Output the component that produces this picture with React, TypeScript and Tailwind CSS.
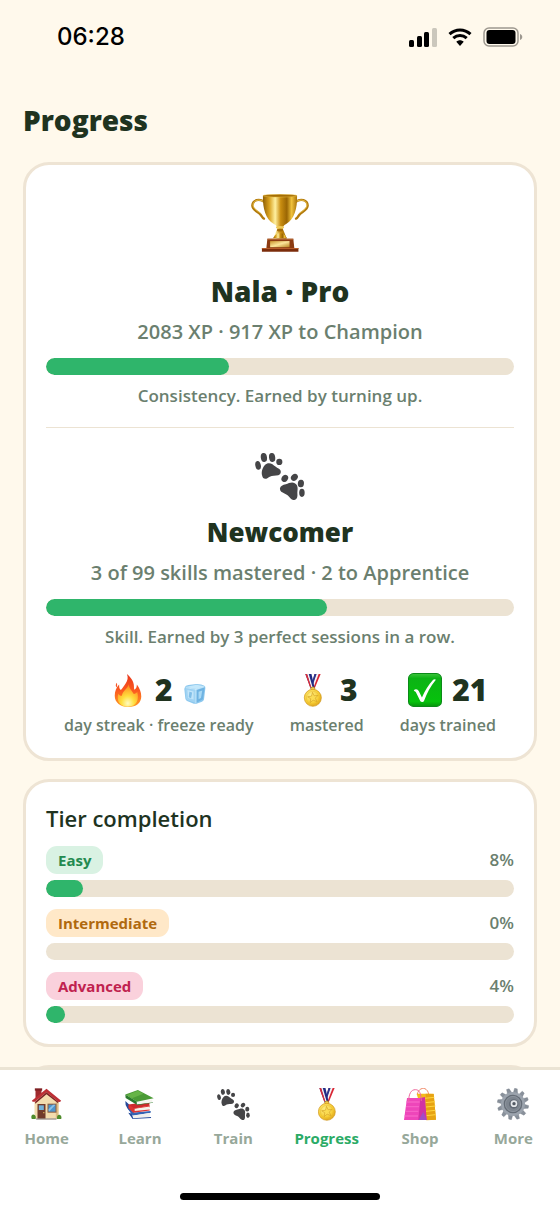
import React from 'react';

interface IconProps {
  className?: string;
}

interface RankProps {
  icon: React.ReactNode;
  title: string;
  titleSize: string;
  detail: string;
  percent: number;
  note: string;
}

interface StatProps {
  icon: React.ReactNode;
  value: number;
  label: string;
  extra?: React.ReactNode;
}

function TrophyIcon({ className }: IconProps) {
  return (
    <svg viewBox="0 0 170 170" className={className} aria-hidden="true">
      <defs>
        <linearGradient id="trophyCup" x1="0" x2="1">
          <stop offset="0" stopColor="#8f5f05" />
          <stop offset="0.18" stopColor="#d79f1c" />
          <stop offset="0.36" stopColor="#fff0a0" />
          <stop offset="0.52" stopColor="#c98d10" />
          <stop offset="0.7" stopColor="#9a6604" />
          <stop offset="0.84" stopColor="#f0c23c" />
          <stop offset="1" stopColor="#a87208" />
        </linearGradient>
        <linearGradient id="trophyPlate" x1="0" x2="1" y2="1">
          <stop offset="0" stopColor="#c9952c" />
          <stop offset="0.5" stopColor="#fbe59a" />
          <stop offset="1" stopColor="#b98420" />
        </linearGradient>
      </defs>
      <g fill="none" strokeLinecap="round">
        <path d="M39 23C24 12 5 18 4 33c-1 13 14 18 22 25 5 5 6 12 12 14" stroke="#b27a0c" strokeWidth="7" />
        <path d="M131 23c15-11 34-5 35 10 1 13-14 18-22 25-5 5-6 12-12 14" stroke="#b27a0c" strokeWidth="7" />
        <path d="M37 22C23 13 7 19 6 32c0 11 14 17 21 24" stroke="#f2cb55" strokeWidth="2.5" />
        <path d="M133 22c14-9 30-3 31 10 0 11-14 17-21 24" stroke="#f2cb55" strokeWidth="2.5" />
      </g>
      <path d="M35 5h100c1 38-8 68-31 82-9 5-13 10-10 17l11 27H65l11-27c3-7-1-12-10-17C43 73 34 43 35 5Z" fill="url(#trophyCup)" />
      <ellipse cx="85" cy="5" rx="50" ry="4" fill="#a46d05" stroke="#e8bd43" strokeWidth="1.5" />
      <ellipse cx="85" cy="98" rx="12" ry="4" fill="#f0ca57" />
      <ellipse cx="85" cy="106" rx="9" ry="4" fill="#a36b07" />
      <path d="M65 129c7-12 12-14 20-14s13 2 20 14Z" fill="url(#trophyCup)" />
      <path d="M48 131h76l3 28H45Z" fill="#8c3b12" />
      <path d="M48 131h76v3H48Z" fill="#b96a35" />
      <path d="M32 158h107v11H32Z" fill="#7b2c0b" />
      <path d="M32 158h107v3H32Z" fill="#b65c2a" />
      <path d="M56 138h57v18H56Z" fill="url(#trophyPlate)" />
    </svg>
  );
}

function PawsIcon({ className }: IconProps) {
  return (
    <svg viewBox="0 0 146 137" className={className} fill="#454547" aria-hidden="true">
      <ellipse cx="9" cy="36" rx="8" ry="13" transform="rotate(-12 9 36)" />
      <ellipse cx="26" cy="13" rx="9" ry="13" transform="rotate(-8 26 13)" />
      <ellipse cx="50" cy="13" rx="9" ry="13" transform="rotate(-8 50 13)" />
      <ellipse cx="71" cy="26" rx="9" ry="9" />
      <path d="M21 66c-3-8-1-21 8-31 6-7 15-7 22-2 6 5 11 9 19 13 8 5 7 16-2 19-8 2-18 0-25 4-6 3-8 6-13 6-5 0-8-4-9-9Z" />
      <ellipse cx="87" cy="74" rx="9" ry="11" transform="rotate(35 87 74)" />
      <ellipse cx="115" cy="71" rx="9" ry="11" transform="rotate(48 115 71)" />
      <ellipse cx="134" cy="89" rx="9" ry="11" transform="rotate(5 134 89)" />
      <ellipse cx="137" cy="116" rx="8" ry="12" />
      <path d="M73 103c1-7 8-10 17-12 9-3 18-8 26-3 9 5 9 13 8 23-1 8 1 13-1 19-3 9-14 9-19 3-5-7-10-12-18-15-8-4-14-6-13-15Z" />
    </svg>
  );
}

function FireIcon({ className }: IconProps) {
  return (
    <svg viewBox="0 0 78 97" className={className} aria-hidden="true">
      <defs>
        <linearGradient id="fireOuter" x1="0" x2="0" y1="0" y2="1">
          <stop offset="0" stopColor="#e8361c" />
          <stop offset="0.5" stopColor="#fb5a20" />
          <stop offset="1" stopColor="#ff9d22" />
        </linearGradient>
        <radialGradient id="fireInner" cx="0.5" cy="0.85" r="0.8">
          <stop offset="0" stopColor="#fffbc0" />
          <stop offset="0.4" stopColor="#ffdf3e" />
          <stop offset="1" stopColor="#ff8a1e" />
        </radialGradient>
      </defs>
      <path d="M36 0c8 7 18 17 20 31 1 7 0 12 2 15 5-2 7-8 7-15 8 10 13 23 13 35 0 19-15 31-38 31S0 84 0 64c0-13 5-25 13-33 0 7 0 13 5 16 6-5 8-11 14-19 6-9 8-17 4-28Z" fill="url(#fireOuter)" />
      <path d="M41 30c1 13 11 20 15 29 5-1 8-3 10-7 6 21 0 44-27 44C15 96 5 80 10 58c4 5 7 7 11 6 2-15 16-19 20-34Z" fill="url(#fireInner)" />
      <path d="M6 26c-4 5-4 10 0 14 1-5 2-9 0-14Z" fill="#f65a2b" />
    </svg>
  );
}

function IceIcon({ className }: IconProps) {
  return (
    <svg viewBox="0 0 63 59" className={className} aria-hidden="true">
      <path d="M2 9Q3 4 12 3L36 0q16 1 23 5 4 2 3 8l-4 33q-1 4-6 6l-16 6q-4 1-8 0L8 50q-4-2-5-7L0 15Z" fill="#8dc8ee" />
      <path d="M3 9 36 2l23 5-23 8Z" fill="#c4e8fb" />
      <path d="m3 13 30 5-1 37L9 47q-4-2-4-6Z" fill="#a0d3f3" />
      <path d="m37 18 23-8-5 35-19 10Z" fill="#6fb3e2" />
      <path d="m9 18 18 4v24l-16-5Z" fill="#c2e5fa" />
      <path d="m15 23 8 2-3 17-7-3Z" fill="#82bfe8" />
      <path d="m42 23 11-4-4 22-7 4Z" fill="#a9d9f5" />
      <path d="M34 15v41M4 11l31 5 24-8" stroke="#dff4ff" strokeWidth="2" fill="none" />
    </svg>
  );
}

function MedalIcon({ className }: IconProps) {
  return (
    <svg viewBox="0 0 53 97" className={className} aria-hidden="true">
      <defs>
        <radialGradient id="medalGold" cx="0.4" cy="0.35" r="0.7">
          <stop offset="0" stopColor="#fff08a" />
          <stop offset="0.65" stopColor="#f6cd35" />
          <stop offset="1" stopColor="#dda21a" />
        </radialGradient>
      </defs>
      <path d="M31 0h18L31 43H20Z" fill="#d92735" />
      <path d="M36 0h7L28 40h-6Z" fill="#f7f4f6" />
      <path d="M31 0h6L24 38h-5Z" fill="#29378f" />
      <path d="M4 0h18l10 43H20Z" fill="#202c85" />
      <path d="M9 0h5l11 38h-4Z" fill="#f7f4f6" />
      <path d="M4 0h5l12 38-3 2Z" fill="#df2b36" />
      <ellipse cx="26" cy="43" rx="6" ry="5" fill="#f4cf4b" stroke="#c38b18" strokeWidth="2" />
      <circle cx="26" cy="70" r="25" fill="url(#medalGold)" stroke="#cf951b" strokeWidth="2" />
      <circle cx="26" cy="70" r="19" fill="none" stroke="#e0ae28" strokeWidth="1" />
      <path d="m25 54 5 10 11-1-8 8 5 10-11-4-9 7 2-11-9-6 11-2Z" fill="#fbdc53" stroke="#c9931c" strokeWidth="1.5" strokeLinejoin="round" />
    </svg>
  );
}

function CheckIcon({ className }: IconProps) {
  return (
    <svg viewBox="0 0 100 100" className={className} aria-hidden="true">
      <defs>
        <linearGradient id="checkGreen" x1="0" x2="0" y1="0" y2="1">
          <stop offset="0" stopColor="#3cc43c" />
          <stop offset="0.15" stopColor="#0cb315" />
          <stop offset="0.85" stopColor="#06c20c" />
          <stop offset="1" stopColor="#07930d" />
        </linearGradient>
      </defs>
      <rect x="1.5" y="1.5" width="97" height="97" rx="15" fill="url(#checkGreen)" stroke="#0b8a18" strokeWidth="3" />
      <path d="M17 51c5-6 12-4 15 3l9 18c9-20 19-37 33-52 2-2 7-2 8 0C66 39 56 59 47 82c-2 4-9 4-11 0L24 58c-2-4-5-3-7-7Z" fill="#fff" />
    </svg>
  );
}

function HouseIcon({ className }: IconProps) {
  return (
    <svg viewBox="0 0 92 96" className={className} aria-hidden="true">
      <path d="M13 3h18v28H13Z" fill="#9e2b2e" />
      <path d="M11 1h22v7H11Z" fill="#7e2023" />
      <path d="M10 42 46 8l36 34v50H10Z" fill="#f3dcae" />
      <path d="M74 40h8v52h-8Z" fill="#dcbc86" />
      <path d="M46 2 90 38q-4 6-9 3L46 13 11 41q-6 2-9-3Z" fill="#bd2f35" />
      <path d="M46 13 12 41v6l34-28 35 27v-5Z" fill="#7c2024" />
      <path d="M19 48h24v45H19Z" fill="#723b2b" />
      <path d="M23 52h15v14H23Z" fill="#74b2da" />
      <circle cx="38" cy="74" r="2" fill="#f4ce5d" />
      <path d="M49 47h27v27H49Z" fill="#8a5a3d" />
      <path d="M52 50h21v21H52Z" fill="#4d94cd" />
      <path d="m52 64 14-14h7L53 71Z" fill="#8bc2e8" />
      <path d="M15 91h61v4H15Z" fill="#9b9189" />
      <path d="M1 91c-2-7 2-13 7-11 6 1 7 7 5 13H2Zm77 2c-2-8 2-14 7-13 6 2 7 8 5 13Z" fill="#4f8c2c" />
    </svg>
  );
}

function BooksIcon({ className }: IconProps) {
  return (
    <svg viewBox="0 0 88 88" className={className} aria-hidden="true">
      {/* blue */}
      <path d="M1 33q-1 14 6 22l16 21v-8l6-9Z" fill="#24499a" />
      <path d="m8 55 20 13 50-4v5l-54 9Z" fill="#3463b4" />
      <path d="m24 77 52-7-1 11-49 5Z" fill="#f0f0ee" />
      <path d="m20 71 5 15 54-4v3l-56 3L10 69Z" fill="#24499a" />
      {/* red */}
      <path d="m11 44 63-9v18l-50 14-13-12Z" fill="#ce2a2c" />
      <path d="m28 56 46-8v11l-46 7Z" fill="#f5f1e8" />
      <path d="m11 44 16 11 48-8v3l-46 7v7l46-5v3l-50 7-14-14Z" fill="#df3432" />
      {/* green */}
      <path d="m1 14 35 21v10L2 24Z" fill="#2b7a2d" />
      <path d="m36 35 47-6-1 9-46 7Z" fill="#f5f5ee" />
      <path d="M1 14 39 0l48 25-51 11Z" fill="#4b9b36" />
      <path d="m6 15 33-13 17 9-35 14Z" fill="#66b447" />
      <path d="m82 38 3-1v2l-49 7v-2Z" fill="#2b7a2d" />
    </svg>
  );
}

function BagsIcon({ className }: IconProps) {
  return (
    <svg viewBox="0 0 96 99" className={className} aria-hidden="true">
      <path d="M40 19C42 3 58-3 66 4c8 6 8 14 8 23" fill="none" stroke="#ef8a69" strokeWidth="3" />
      <path d="M38 17h51l7 78-36 1Z" fill="#f4b91d" />
      <path d="m65 17 24 1 7 77-29 2Z" fill="#e7a313" />
      <path d="m62 31 29-3m-27 16 29-3m-27 16 28-3M66 70l28-3M67 83l28-3" stroke="#ffd53f" strokeWidth="3" />
      <path d="M9 30h49l10 66H0Z" fill="#ee46ba" />
      <path d="m49 30 14-3 5 69H43Z" fill="#d132a4" />
      <path d="m44 96 14-25 10 25Z" fill="#a24cc4" />
      <path d="M8 42h39M6 56h39M4 70h39M2 84h40" stroke="#f661c6" strokeWidth="4" />
      <path d="M14 41C14 16 22 5 34 5s17 10 18 34" fill="none" stroke="#ee6a9e" strokeWidth="3" />
    </svg>
  );
}

function GearIcon({ className }: IconProps) {
  const teeth = [0, 30, 60, 90, 120, 150, 180, 210, 240, 270, 300, 330];

  return (
    <svg viewBox="0 0 96 96" className={className} aria-hidden="true">
      <g fill="#89919b" stroke="#69717c" strokeWidth="1">
        {teeth.map((angle) => (
          <path key={angle} d="m42 15 1-14h8l4 14Z" transform={`rotate(${angle + 12} 48 48)`} />
        ))}
      </g>
      <circle cx="48" cy="48" r="36" fill="#9ba3ad" />
      <circle cx="48" cy="48" r="28" fill="#646c76" />
      <circle cx="48" cy="48" r="23" fill="#7d858f" stroke="#9aa1ab" strokeWidth="2" />
      <circle cx="50" cy="48" r="14" fill="#626a75" />
      <circle cx="51" cy="47" r="10" fill="#e4e7ea" />
      <circle cx="51" cy="47" r="5" fill="#525963" />
    </svg>
  );
}

function StatusIcons() {
  return (
    <div className="flex items-center gap-[11px]" aria-hidden="true">
      <svg viewBox="0 0 28 19" className="h-[19px] w-7">
        <rect x="0" y="12" width="5" height="7" rx="1.5" />
        <rect x="8" y="8" width="5" height="11" rx="1.5" />
        <rect x="15" y="4" width="5" height="15" rx="1.5" />
        <rect x="23" y="0" width="5" height="19" rx="1.5" fill="#cbc7bc" />
      </svg>
      <svg viewBox="0 0 24 18" className="h-[18px] w-6">
        <path d="M1.5 6.2C7.500 0.600 16.500 0.600 22.500 6.200" fill="none" stroke="#000" strokeWidth="3" />
        <path d="M5.3 10.2C9.200 6.600 14.800 6.600 18.700 10.200" fill="none" stroke="#000" strokeWidth="3" />
        <path d="M8.300 13.800c2.200-2 5.200-2 7.400 0L12 18Z" />
      </svg>
      <svg viewBox="0 0 40 20" className="h-5 w-10">
        <rect x="1" y="1" width="34" height="18" rx="5" fill="none" stroke="#9d988f" strokeWidth="1.5" />
        <rect x="3.5" y="3" width="29" height="14" rx="3" />
        <path d="M37 7c3 1 3 5 0 6Z" fill="#9d988f" />
      </svg>
    </div>
  );
}

function ProgressBar({ percent, label }: { percent: number; label: string }) {
  return (
    <div
      role="progressbar"
      aria-label={label}
      aria-valuenow={percent}
      aria-valuemin={0}
      aria-valuemax={100}
      className="h-[17px] w-full overflow-hidden rounded-full bg-[#ece3d3]"
    >
      <div className="h-full rounded-full bg-[#2fb56b]" style={{ width: `${percent}%` }} />
    </div>
  );
}

function Rank({ icon, title, titleSize, detail, percent, note }: RankProps) {
  return (
    <div className="flex flex-col items-center text-center text-[#6b7f6f]">
      {icon}
      <h2 className={`mt-[10px] leading-[44px] font-extrabold text-[#20331f] ${titleSize}`}>{title}</h2>
      <p className="mt-[6px] mb-[13px] text-[20px] leading-[26px] font-semibold">{detail}</p>
      <ProgressBar percent={percent} label={title} />
      <p className="mt-[9px] text-[17px] leading-6 font-semibold">{note}</p>
    </div>
  );
}

function Stat({ icon, value, label, extra }: StatProps) {
  return (
    <div className="flex flex-col items-center">
      <div className="flex h-[44px] items-center gap-[10px]">
        {icon}
        <span className="text-[30px] leading-[44px] font-extrabold text-[#20331f]">{value}</span>
        {extra}
      </div>
      <span className="mt-px text-[16px] leading-6 font-semibold text-[#6b7f6f]">{label}</span>
    </div>
  );
}

const tiers = [
  { name: 'Easy', percent: 8, badge: 'bg-[#d9f2e3] text-[#238a50]' },
  { name: 'Intermediate', percent: 0, badge: 'bg-[#ffe8c8] text-[#b0690f]' },
  { name: 'Advanced', percent: 4, badge: 'bg-[#fad1dc] text-[#c0224f]' },
];

const tabs = [
  { name: 'Home', icon: <HouseIcon className="h-8 w-[31px]" /> },
  { name: 'Learn', icon: <BooksIcon className="h-[29px] w-[29px]" /> },
  { name: 'Train', icon: <PawsIcon className="h-[31px] w-[33px]" /> },
  { name: 'Progress', icon: <MedalIcon className="h-[33px] w-[18px]" /> },
  { name: 'Shop', icon: <BagsIcon className="h-[33px] w-8" /> },
  { name: 'More', icon: <GearIcon className="h-8 w-8" /> },
];

const cardClass = 'mt-[18px] rounded-[26px] border-[3px] border-[#eee4d4] bg-white px-5';

export default function App() {
  return (
    <div className="flex h-dvh flex-col overflow-hidden bg-[#fff9ec] font-['Open_Sans',sans-serif]">
      {/* Status bar */}
      <header className="flex h-[74px] shrink-0 items-center justify-between pr-[37px] pl-[57px]">
        <span className="font-['Inter'] text-[24px] leading-8 font-medium text-black">06:28</span>
        <StatusIcons />
      </header>

      <main className="min-h-0 flex-1 overflow-y-auto px-[23px] [scrollbar-width:none]">
        <h1 className="mt-6 mb-5 text-[28px] leading-[44px] font-extrabold text-[#20331f]">Progress</h1>

        {/* Ranks */}
        <section className={`${cardClass} pt-[22px] pb-[21px]`}>
          <Rank
            icon={
              <div className="flex h-[72px] items-center">
                <TrophyIcon className="h-[58px] w-[58px]" />
              </div>
            }
            title="Nala · Pro"
            titleSize="text-[28px]"
            detail="2083 XP · 917 XP to Champion"
            percent={39}
            note="Consistency. Earned by turning up."
          />
          <hr className="mt-[19px] mb-4 border-[#ece3d3]" />
          <Rank
            icon={
              <div className="flex h-14 items-end">
                <PawsIcon className="h-[47px] w-[50px]" />
              </div>
            }
            title="Newcomer"
            titleSize="text-[26px]"
            detail="3 of 99 skills mastered · 2 to Apprentice"
            percent={60}
            note="Skill. Earned by 3 perfect sessions in a row."
          />
          <div className="mt-[19px] flex justify-around">
            <Stat
              icon={<FireIcon className="h-[33px] w-[34px]" />}
              value={2}
              label="day streak · freeze ready"
              extra={<IceIcon className="mt-2 h-5 w-6" />}
            />
            <Stat icon={<MedalIcon className="h-[33px] w-[34px]" />} value={3} label="mastered" />
            <Stat icon={<CheckIcon className="h-[34px] w-[34px]" />} value={21} label="days trained" />
          </div>
        </section>

        {/* Tiers */}
        <section className={`${cardClass} pt-5 pb-[21px]`}>
          <h2 className="text-[22px] leading-8 font-semibold text-[#20331f]">Tier completion</h2>
          {tiers.map((tier) => (
            <div key={tier.name} className="mt-3">
              <div className="mb-[6px] flex h-7 items-center justify-between">
                <span className={`rounded-[11px] px-3 text-[15px] leading-7 font-bold ${tier.badge}`}>{tier.name}</span>
                <span className="text-[17px] leading-6 font-semibold text-[#6b7f6f]">{tier.percent}%</span>
              </div>
              <ProgressBar percent={tier.percent} label={tier.name} />
            </div>
          ))}
        </section>

        <section className={`${cardClass} mb-6 h-40`} />
      </main>

      {/* Tab bar */}
      <nav className="shrink-0 border-t-[3px] border-[#ebe4d4] bg-white pb-3">
        <div className="grid grid-cols-6 pt-4">
          {tabs.map((tab) => (
            <button
              key={tab.name}
              type="button"
              aria-current={tab.name === 'Progress' ? 'page' : undefined}
              className={`flex flex-col items-center gap-1 text-[15px] leading-6 font-bold ${
                tab.name === 'Progress' ? 'text-[#2bab66]' : 'text-[#97a89a]'
              }`}
            >
              <span className="flex h-9 items-center">{tab.icon}</span>
              {tab.name}
            </button>
          ))}
        </div>
        <div className="mx-auto mt-[43px] h-[7px] w-[200px] rounded-full bg-black" />
      </nav>
    </div>
  );
}
